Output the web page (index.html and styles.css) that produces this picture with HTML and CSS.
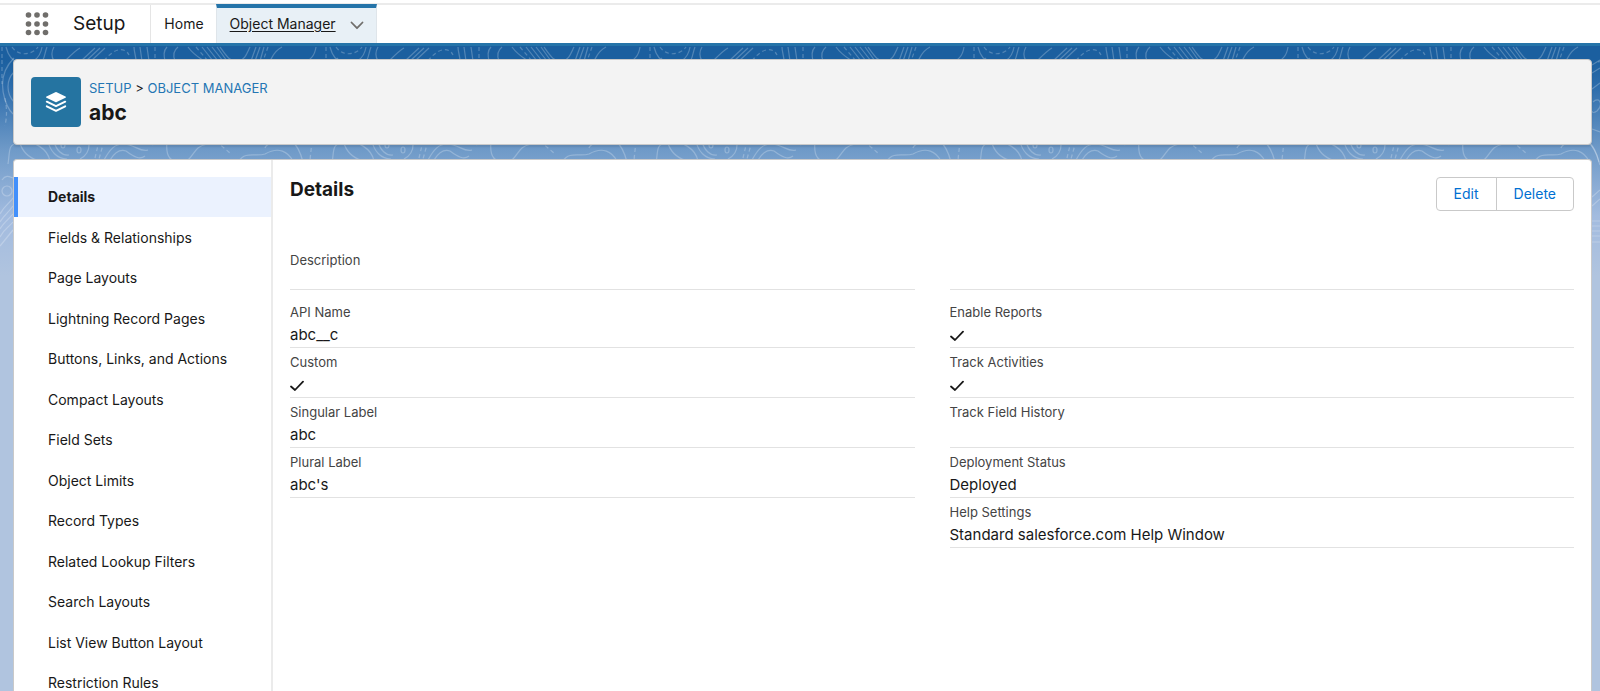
FILE: index.html
```html
<!DOCTYPE html>
<html lang="en">
<head>
<meta charset="utf-8">
<title>Object Manager | Setup</title>
<link rel="stylesheet" href="styles.css">
</head>
<body>
<div class="shell">
  <header class="nav">
    <button class="launcher" aria-label="App Launcher">
      <svg width="24" height="24" viewBox="0 0 24 24" fill="#706e6b" aria-hidden="true">
        <circle cx="3.500" cy="3" r="2.800"/><circle cx="12" cy="3" r="2.800"/><circle cx="20.500" cy="3" r="2.800"/>
        <circle cx="3.500" cy="12" r="2.800"/><circle cx="12" cy="12" r="2.800"/><circle cx="20.500" cy="12" r="2.800"/>
        <circle cx="3.500" cy="20.500" r="2.800"/><circle cx="12" cy="20.500" r="2.800"/><circle cx="20.500" cy="20.500" r="2.800"/>
      </svg>
    </button>
    <span class="app-name">Setup</span>
    <nav class="tabs">
      <a class="tab" href="#home">Home</a>
      <div class="tab tab-active">
        <a class="tab-link" href="#objects">Object Manager</a>
        <button class="tab-menu" aria-label="Object Manager list">
          <svg width="14" height="9" viewBox="0 0 14 9" fill="none" stroke="#706e6b" stroke-width="1.8" stroke-linecap="round" stroke-linejoin="round" aria-hidden="true"><path d="M1.500 1.500L7 7.200L12.500 1.500"/></svg>
        </button>
      </div>
    </nav>
  </header>

  <div class="stage">
    <svg class="contours" width="100%" height="240" aria-hidden="true">
      <defs>
        <pattern id="contour" width="324" height="240" patternUnits="userSpaceOnUse">
          <g fill="none" stroke="#fff" stroke-opacity=".24" stroke-width="1.2">
            <path d="M6 1C8 9 12 15 19 17C30 19 40 14 42 1M47 1C45 6 45 10 43 14M54 1C51 6 51 10 54 15M80 2C76 4 71 9 66 14M95 2L81 15M100 2L86 15M105 2L91 15M134 1C134 6 136 10 136 15M140 1L142 15M147 1L149 15M167 1C163 5 164 10 165 15M178 1C173 5 173 10 175 15M188 1C193 8 198 11 204 15M202 1L213 15M207 1L218 15M212 1L223 15M217 1L227 15M220 1C227 11 230 16 239 15C245 14 247 7 250 1M256 1L251 15M260 1L255 15M264 1L260 15M282 1C274 5 273 10 270 15M316 1C315 8 312 15 302 16"/>
            <path stroke-dasharray="4 3" d="M12 1C18 10 31 10 38 1M104 15C112 4 124 -1 129 9M155 1V15M196 1L208 15M268 1L263 15M2 1V15"/>
            <path d="M14 12C2 24 0 38 5 54C8 63 12 68 16 70M14 26C6 34 6 47 14 56M8 118C10 105 8 99 17 97C35 93 48 104 50 115M20 97C22 105 29 112 37 114M48 95C50 105 57 113 67 113M54 95C56 104 62 110 69 109M89 95C90 105 86 110 80 113M104 114C110 103 115 98 123 98C135 98 140 107 148 104M110 114C115 106 120 103 126 105C134 111 140 114 145 110M138 95C148 96 151 101 157 97M167 94C166 105 167 112 174 115M187 115C196 107 194 101 207 98C216 98 219 95 224 95M239 115C245 105 256 111 265 108C279 100 288 106 293 115M291 94C297 99 301 108 303 116M265 102C266 98 272 97 275 94"/>
            <ellipse cx="63" cy="99" rx="2" ry="3"/><ellipse cx="79" cy="104" rx="2" ry="3"/>
            <ellipse cx="7" cy="145" rx="5" ry="5"/>
            <path d="M2 134C6 128 10 131 13 132M0 168C4 160 9 158 13 152M0 176C4 169 9 166 13 160M0 183C4 176 9 173 13 168M0 191C4 183 9 181 13 176M0 200L13 184"/>
            <path stroke-dasharray="4 3" d="M95 112L99 95M104 95L99 113M216 95L231 108M312 95L310 114M2 14V38M5 52C7 63 7 70 5 80"/>
          </g>
        </pattern>
      </defs>
      <rect width="100%" height="240" fill="url(#contour)"/>
      <svg x="100%" width="1" height="240" overflow="visible">
        <g fill="none" stroke="#fff" stroke-opacity=".24" stroke-width="1.2">
          <path d="M-8 19L0 14M-8 27L0 22M-8 43L0 37M-7 56C-1 50 4 58 -3 65C-6 67 -8 67 -8 65M-8 83L0 86M-10 98C-3 105 -2 114 0 119M-8 151L0 144M-8 160L0 153M-8 175H0M-8 180H0M-8 185H0M-8 190H0M-8 196H0"/>
        </g>
      </svg>
    </svg>

    <section class="card page-header">
      <span class="object-icon">
        <svg width="22" height="22" viewBox="0 0 22 22" aria-hidden="true">
          <path fill="#fff" d="M10.300 1.300a1.500 1.500 0 0 1 1.400 0l8.800 4.300c.6.300.6.900 0 1.200l-8.800 4.300a1.500 1.500 0 0 1-1.400 0L1.500 6.800c-.6-.3-.6-.9 0-1.200z"/>
          <path fill="none" stroke="#fff" stroke-width="2" stroke-linecap="round" stroke-linejoin="round" d="M1.800 10.700L11 15.200L20.200 10.700M1.800 15.300L11 19.800L20.200 15.300"/>
        </svg>
      </span>
      <div class="heading">
        <div class="crumbs"><a href="#setup">SETUP</a> &gt; <a href="#objects">OBJECT MANAGER</a></div>
        <h1 class="object-name">abc</h1>
      </div>
    </section>

    <div class="card workspace">
      <ul class="side">
        <li><a class="side-link side-current" href="#details">Details</a></li>
        <li><a class="side-link" href="#fields">Fields &amp; Relationships</a></li>
        <li><a class="side-link" href="#layouts">Page Layouts</a></li>
        <li><a class="side-link" href="#record-pages">Lightning Record Pages</a></li>
        <li><a class="side-link" href="#actions">Buttons, Links, and Actions</a></li>
        <li><a class="side-link" href="#compact">Compact Layouts</a></li>
        <li><a class="side-link" href="#field-sets">Field Sets</a></li>
        <li><a class="side-link" href="#limits">Object Limits</a></li>
        <li><a class="side-link" href="#record-types">Record Types</a></li>
        <li><a class="side-link" href="#filters">Related Lookup Filters</a></li>
        <li><a class="side-link" href="#search">Search Layouts</a></li>
        <li><a class="side-link" href="#list-view">List View Button Layout</a></li>
        <li><a class="side-link" href="#restrictions">Restriction Rules</a></li>
      </ul>

      <main class="main">
        <div class="main-top">
          <h2 class="main-title">Details</h2>
          <div class="buttons">
            <button class="button">Edit</button>
            <button class="button">Delete</button>
          </div>
        </div>
        <div class="columns">
          <dl class="fields">
            <div class="field field-intro"><dt>Description</dt><dd></dd></div>
            <div class="field"><dt>API Name</dt><dd>abc__c</dd></div>
            <div class="field"><dt>Custom</dt><dd><svg class="check" role="img" aria-label="True" viewBox="0 0 14 11"><path d="M1 6L5 9.500L13 1.200"/></svg></dd></div>
            <div class="field"><dt>Singular Label</dt><dd>abc</dd></div>
            <div class="field"><dt>Plural Label</dt><dd>abc's</dd></div>
          </dl>
          <dl class="fields">
            <div class="field field-intro"><dt></dt><dd></dd></div>
            <div class="field"><dt>Enable Reports</dt><dd><svg class="check" role="img" aria-label="True" viewBox="0 0 14 11"><path d="M1 6L5 9.500L13 1.200"/></svg></dd></div>
            <div class="field"><dt>Track Activities</dt><dd><svg class="check" role="img" aria-label="True" viewBox="0 0 14 11"><path d="M1 6L5 9.500L13 1.200"/></svg></dd></div>
            <div class="field"><dt>Track Field History</dt><dd></dd></div>
            <div class="field"><dt>Deployment Status</dt><dd>Deployed</dd></div>
            <div class="field"><dt>Help Settings</dt><dd>Standard salesforce.com Help Window</dd></div>
          </dl>
        </div>
      </main>
    </div>
  </div>
</div>
</body>
</html>
```

FILE: styles.css
```css
* { box-sizing: border-box; }

body {
  margin: 0;
  background: #fff;
  color: #181818;
  font-family: Inter, "Liberation Sans", sans-serif;
  font-size: 14px;
  line-height: 20px;
}

h1, h2, ul, dl, dd { margin: 0; padding: 0; }
a { color: inherit; text-decoration: none; }
button { font: inherit; margin: 0; border: 0; background: none; cursor: pointer; }

.shell {
  display: flex;
  flex-direction: column;
  height: 100vh;
  padding-top: 3px;
  overflow: hidden;
}

.nav {
  display: flex;
  flex: none;
  height: 43px;
  border-top: 2px solid #ebebeb;
  border-bottom: 3px solid #2574a9;
}
.launcher { display: flex; align-items: center; padding: 0 0 0 25px; }
.app-name {
  display: flex;
  align-items: center;
  padding: 0 25px 0 24px;
  border-right: 1px solid #e5e5e5;
  font-size: 19px;
}
.tabs { display: flex; }
.tab { display: flex; align-items: center; padding: 0 12px 0 13px; }
.tab-active {
  gap: 14px;
  margin-top: -1px;
  padding-bottom: 3px;
  border: 1px solid #dfe5ea;
  border-width: 0 1px;
  border-top: 4px solid #2574a9;
  background: #e8f0f6;
}
.tab-link { text-decoration: underline; text-underline-offset: 2px; }
.tab-menu { display: flex; padding: 2px 0 0; }

.stage {
  position: relative;
  display: flex;
  flex: 1;
  flex-direction: column;
  gap: 14px;
  min-height: 0;
  padding: 13px 8px 0 13px;
  background: #b0c4df linear-gradient(#1b5f9f, #1b5f9f 14px, #2c6cab 40px, #6f9ac8 104px, #a2bbdf 170px, #b0c4df 230px);
}
.contours { position: absolute; top: 0; left: 0; }

.card {
  position: relative;
  border: 1px solid #c9c9c9;
  border-radius: 4px;
  background: #fff;
}
.page-header {
  display: flex;
  flex: none;
  gap: 8px;
  padding: 17px;
  background: #f3f3f3;
  box-shadow: 0 2px 2px rgba(0, 0, 0, .1);
}
.object-icon {
  display: flex;
  align-items: center;
  justify-content: center;
  width: 50px;
  height: 50px;
  border-radius: 4px;
  background: #2574a1;
}
.crumbs { font-size: 13px; line-height: 22px; }
.crumbs a { color: #2476b3; }
.object-name { font-size: 21px; line-height: 28px; }

.workspace {
  display: flex;
  flex: 1;
  min-height: 0;
  border-bottom: 0;
  border-radius: 4px 4px 0 0;
  overflow: hidden;
}
.side {
  flex: none;
  width: 259px;
  padding-top: 17px;
  border-right: 2px solid #ebebeb;
  list-style: none;
}
.side li:nth-child(even) { padding-top: 1px; }
.side-link { display: block; padding: 10px 12px 10px 34px; }
.side-current {
  padding-left: 30px;
  border-left: 4px solid #4290fb;
  background: #ebf2fe;
  font-weight: 700;
}

.main { flex: 1; min-width: 0; padding: 17px; }
.main-top { display: flex; align-items: flex-start; justify-content: space-between; }
.main-title { font-size: 19px; line-height: 26px; }
.buttons {
  display: flex;
  border: 1px solid #c9c9c9;
  border-radius: 4px;
}
.button { padding: 6px 17px; color: #0070d2; }
.button + .button { border-left: 1px solid #c9c9c9; }

.columns {
  display: grid;
  grid-template-columns: 1fr 1fr;
  gap: 35px;
  padding-top: 35px;
}
.field { padding-top: 4px; border-bottom: 1px solid #e2e2e2; }
.field dt { height: 20px; color: #444; font-size: 13px; }
.field dd { height: 25px; font-size: 15px; line-height: 26px; }
.field-intro { margin-bottom: 8px; }
.field-intro dd { height: 19px; }
.check {
  display: block;
  width: 14px;
  height: 25px;
  padding-top: 3px;
  fill: none;
  stroke: #181818;
  stroke-width: 1.8;
  stroke-linecap: round;
  stroke-linejoin: round;
}
```
